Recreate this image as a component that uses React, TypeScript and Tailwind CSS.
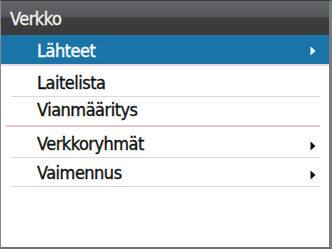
import React from "react";

const Tri = ({ color }: { color: string }) => (
  <svg width="6" height="10" viewBox="0 0 6 10" className="block">
    <polygon points="0.5,0.5 5.5,5 0.5,9.5" fill={color} />
  </svg>
);

export default function App() {
  return (
    <div
      className="w-[332px] h-[249px] bg-white flex flex-col overflow-hidden border-l border-l-[#8a8a8a] border-r-[3px] border-r-[#7b7b7b] border-b-2 border-b-[#6e6e6e] border-t border-t-[#3a3a3a] text-[18px] tracking-[-0.5px] leading-none [-webkit-text-stroke:0.35px_currentColor]"
      style={{ fontFamily: '"DejaVu Sans Condensed", "DejaVu Sans", sans-serif' }}
    >
      <div className="h-[34px] bg-[linear-gradient(to_bottom,#63666a_0%,#55585b_45%,#3e3e3e_50%,#3a3a3a_100%)] flex items-center pl-[9px] pt-[2px] text-[#f2f2f2]">
        Verkko
      </div>
      <div className="h-[29px] bg-[#1a74a8] flex items-center pl-[36px] pr-[13px] pt-[2px] text-white">
        <span className="flex-1">Lähteet</span>
        <Tri color="#ffffff" />
      </div>
      <div className="h-[2px] bg-[#ecd9dc]" />
      <div className="h-[30px] flex items-end pb-[4px] pl-[36px] text-[#111]">
        Laitelista
      </div>
      <div className="h-px ml-[10px] mr-[9px] bg-[#e2d6d9]" />
      <div className="h-[28px] flex items-end pb-[6px] pl-[36px] text-[#111]">
        Vianmääritys
      </div>
      <div className="h-[2px] ml-[4px] mr-[9px] bg-[#e6c9ce]" />
      <div className="h-[30px] flex items-end pb-[4px] pl-[36px] pr-[13px] text-[#111]">
        <span className="flex-1">Verkkoryhmät</span>
        <span className="pb-[2px]"><Tri color="#111111" /></span>
      </div>
      <div className="h-px ml-[10px] mr-[9px] bg-[#e2d6d9]" />
      <div className="h-[28px] flex items-end pb-[4px] pl-[36px] pr-[13px] text-[#111]">
        <span className="flex-1">Vaimennus</span>
        <span className="pb-[2px]"><Tri color="#111111" /></span>
      </div>
      <div className="h-px ml-[10px] mr-[9px] bg-[#e2d6d9]" />
    </div>
  );
}
